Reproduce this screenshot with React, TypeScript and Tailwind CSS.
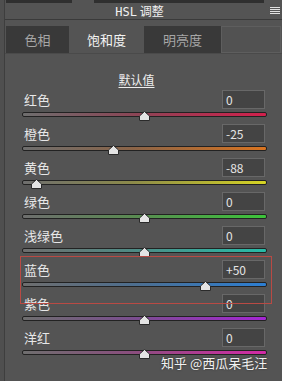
import React from "react";

type Row = { label: string; value: string; pos: number; track: string; highlight?: boolean };

const rows: Row[] = [
  { label: "红色", value: "0", pos: 0, track: "bg-[linear-gradient(to_right,#6e6e6e,#8a4656_45%,#d2204c)]" },
  { label: "橙色", value: "-25", pos: -25, track: "bg-[linear-gradient(to_right,#6e6e6e,#8a6448_45%,#d97420)]" },
  { label: "黄色", value: "-88", pos: -88, track: "bg-[linear-gradient(to_right,#6e6e6e,#8c8a4a_45%,#d6d424)]" },
  { label: "绿色", value: "0", pos: 0, track: "bg-[linear-gradient(to_right,#6e6e6e,#5a8a52_45%,#3cc43a)]" },
  { label: "浅绿色", value: "0", pos: 0, track: "bg-[linear-gradient(to_right,#6e6e6e,#4e8a84_45%,#26bca8)]" },
  { label: "蓝色", value: "+50", pos: 50, track: "bg-[linear-gradient(to_right,#6e6e6e,#4e6e8e_45%,#2c7ed2)]", highlight: true },
  { label: "紫色", value: "0", pos: 0, track: "bg-[linear-gradient(to_right,#6e6e6e,#7a4e8e_45%,#a526d4)]" },
  { label: "洋红", value: "0", pos: 0, track: "bg-[linear-gradient(to_right,#6e6e6e,#8a4e7e_45%,#d42aa6)]" },
];

function Thumb() {
  return (
    <svg width="11" height="10" viewBox="0 0 11 10" className="block">
      <polygon points="5.5,0.5 10.5,5 10.5,9.5 0.5,9.5 0.5,5" fill="#e4e4e4" stroke="#2a2a2a" strokeWidth="1" />
    </svg>
  );
}

function SliderRow({ r }: { r: Row }) {
  const left = 122 + (r.pos / 100) * 122 - 5.5;
  return (
    <div className="relative h-[34px] pl-[17px] pr-[15px]">
      {r.highlight && (
        <div className="pointer-events-none absolute left-[15px] top-[-4px] z-10 h-[48px] w-[252px] border border-[#b94a44]" />
      )}
      <div className="flex h-[19px] items-center justify-between">
        <span className="ml-[2px] text-[13px] leading-none text-[#e8e8e8]">{r.label}</span>
        <div className="mr-[2px] flex h-[19px] w-[43px] items-center border border-[#686868] bg-[#444444] pl-[3px] text-[12px] text-[#e4e4e4]">
          {r.value}
        </div>
      </div>
      <div className="relative mt-[3px] h-[7px]">
        <div className={`mt-[1px] h-[5px] rounded-[2px] border border-[#222222] ${r.track}`} />
        <div className="absolute top-[-1px]" style={{ left: `${left}px` }}>
          <Thumb />
        </div>
      </div>
    </div>
  );
}

export default function App() {
  return (
    <div
      className="relative flex h-[381px] w-[282px] overflow-hidden bg-[#545454]"
      style={{ fontFamily: '"Noto Sans CJK SC", "Noto Sans", sans-serif' }}
    >
      <div className="w-[5px] border-r border-[#3e3e3e] bg-[#4f4f4f]" />
      <div className="flex flex-1 flex-col">
        <div className="flex h-[3px]">
          <div className="ml-[1px] w-[66px] bg-[#2f2f2f]" />
          <div className="ml-[22px] w-[170px] bg-[#2f2f2f]" />
        </div>
        <div className="flex h-[17px] items-center border-b border-[#3a3a3a]">
          <div className="flex-1 pl-[4px] text-center text-[12px] leading-none text-[#f0f0f0]">
            <span style={{ fontFamily: '"DejaVu Sans Mono", monospace' }}>HSL</span> 调整
          </div>
          <svg width="10" height="8" viewBox="0 0 10 8" className="mr-[2px]">
            <rect x="0" y="0" width="10" height="1" fill="#e0e0e0" />
            <rect x="0" y="2" width="10" height="1" fill="#e0e0e0" />
            <rect x="0" y="4" width="10" height="1" fill="#e0e0e0" />
            <rect x="0" y="6" width="10" height="1" fill="#e0e0e0" />
          </svg>
        </div>
        <div className="mt-[6px] flex h-[28px] border-b border-[#4a4a4a] text-[13px]">
          <div className="ml-[1px] flex w-[63px] items-center justify-center bg-[#393939] text-[#a6a6a6]">色相</div>
          <div className="flex w-[75px] items-center justify-center text-[#f4f4f4]">饱和度</div>
          <div className="flex w-[77px] items-center justify-center bg-[#393939] text-[#a6a6a6]">明亮度</div>
          <div className="mr-[1px] flex-1 border border-[#5e5e5e] bg-[#525252]" />
        </div>
        <div className="h-[36px] pt-[12px] pr-[14px] text-center">
          <span className="text-[12px] leading-[14px] text-[#eeeeee] underline underline-offset-2">默认值</span>
        </div>
        <div className="flex flex-col">
          {rows.map((r) => (
            <SliderRow key={r.label} r={r} />
          ))}
        </div>
      </div>
      <div className="absolute left-[161px] top-[354px] z-20 text-[13px] leading-[18px] text-[#f2f2f2] [text-shadow:0_0_2px_rgba(0,0,0,0.5)]">
        知乎 @西瓜呆毛汪
      </div>
    </div>
  );
}
